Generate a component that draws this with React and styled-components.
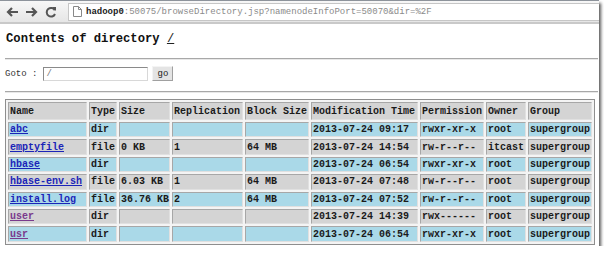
import React from "react";
import styled, { createGlobalStyle } from "styled-components";

const GlobalStyle = createGlobalStyle`
  body {
    margin: 0;
    background: #fff;
  }
`;

const Window = styled.div`
  width: 599px;
  height: 246px;
  background: #fff;
  box-shadow: 2px 3px 3px rgba(0, 0, 0, 0.65);
  overflow: hidden;
`;

const Toolbar = styled.div`
  height: 21px;
  display: flex;
  align-items: center;
  background: linear-gradient(#f7f7f7, #e6e6e6);
  border-top: 1px solid #8d939b;
  border-bottom: 2px solid #c9c9c9;
`;

const NavButton = styled.span`
  width: 19px;
  height: 19px;
  display: flex;
  align-items: center;
  justify-content: center;
  margin-left: ${({ $first }) => ($first ? "3px" : "0")};
`;

const AddressBar = styled.div`
  flex: 1;
  height: 16px;
  margin-left: 8px;
  display: flex;
  align-items: center;
  gap: 4px;
  padding-left: 4px;
  background: #fff;
  border: 1px solid #c6c6c6;
  border-right: none;
  font-family: "Liberation Mono", monospace;
  font-size: 9px;
  color: #8a8a8a;
  white-space: nowrap;
`;

const Host = styled.span`
  color: #222;
  font-weight: bold;
`;

const Page = styled.div`
  padding: 0 1px 0 5px;
  font-family: "Liberation Mono", "DejaVu Sans Mono", monospace;
`;

const Heading = styled.h1`
  margin: 8px 0 0 1px;
  font-size: 12.2px;
  line-height: 15px;
  font-weight: bold;
  color: #111;

  a {
    color: #222;
    font-weight: normal;
  }
`;

const Rule = styled.hr`
  margin: ${({ $top }) => $top}px 0 0 0;
  height: 0;
  border: none;
  border-top: 1px solid #a8a8a8;
  border-bottom: 1px solid #e8e8e8;
`;

const GotoRow = styled.form`
  margin-top: 6px;
  display: flex;
  align-items: center;
  font-size: 9px;
  color: #333;
`;

const GotoInput = styled.input`
  margin-left: 6px;
  width: 99px;
  height: 12px;
  padding: 0 2px;
  border: 1px solid #8a8a8a;
  border-right-color: #d8d8d8;
  border-bottom-color: #d8d8d8;
  font-family: "Liberation Mono", monospace;
  font-size: 9px;
  color: #777;
  outline: none;
`;

const GoButton = styled.button`
  margin-left: 4px;
  width: 21px;
  height: 15px;
  padding: 0;
  background: #e4e4e4;
  border: 1px solid #a0a0a0;
  border-top-color: #f4f4f4;
  border-left-color: #f4f4f4;
  font-family: "Liberation Mono", monospace;
  font-size: 9px;
  color: #222;
`;

const Table = styled.table`
  margin-top: 6px;
  width: 588px;
  table-layout: fixed;
  border: 1px solid #8e8e8e;
  border-spacing: 2px;
  background: #f4f4f4;
  font-size: 10px;
  font-weight: bold;
  color: #1a1a1a;
`;

const Cell = styled.td`
  height: 13.4px;
  padding: 0 1px;
  border: 1px solid #a7a7a7;
  border-right-color: #e0e0e0;
  border-bottom-color: #e0e0e0;
  background: ${({ $blue }) => ($blue ? "#aad9e8" : "#d4d4d4")};
  white-space: nowrap;
  line-height: 13px;
`;

const HeadCell = styled(Cell).attrs({ as: "th" })`
  height: 16px;
  text-align: left;
  background: #d4d4d4;
  width: ${({ $w }) => $w}px;
`;

const FileLink = styled.a`
  color: ${({ $visited }) => ($visited ? "#7a3a8c" : "#1b24b8")};
  text-decoration: underline;
`;

const columns = [
  ["Name", 75],
  ["Type", 24],
  ["Size", 47],
  ["Replication", 67],
  ["Block Size", 60],
  ["Modification Time", 103],
  ["Permission", 60],
  ["Owner", 36],
  ["Group", 60],
];

const rows = [
  ["abc", "dir", "", "", "", "2013-07-24 09:17", "rwxr-xr-x", "root", "supergroup"],
  ["emptyfile", "file", "0 KB", "1", "64 MB", "2013-07-24 14:54", "rw-r--r--", "itcast", "supergroup"],
  ["hbase", "dir", "", "", "", "2013-07-24 06:54", "rwxr-xr-x", "root", "supergroup"],
  ["hbase-env.sh", "file", "6.03 KB", "1", "64 MB", "2013-07-24 07:48", "rw-r--r--", "root", "supergroup"],
  ["install.log", "file", "36.76 KB", "2", "64 MB", "2013-07-24 07:52", "rw-r--r--", "root", "supergroup"],
  ["user", "dir", "", "", "", "2013-07-24 14:39", "rwx------", "root", "supergroup", true],
  ["usr", "dir", "", "", "", "2013-07-24 06:54", "rwxr-xr-x", "root", "supergroup", true],
];

const Arrow = ({ flip }) => (
  <svg width="13" height="12" viewBox="0 0 13 12">
    <path
      d={flip ? "M1 6h10M7 2l4 4-4 4" : "M12 6H2M6 2L2 6l4 4"}
      stroke="#555"
      strokeWidth="2.2"
      fill="none"
    />
  </svg>
);

const Reload = () => (
  <svg width="12" height="12" viewBox="0 0 12 12">
    <path d="M9.8 4.2A4.3 4.3 0 1 0 10 8" stroke="#555" strokeWidth="2" fill="none" />
    <path d="M7 1h4v4z" fill="#555" />
  </svg>
);

const PageIcon = () => (
  <svg width="9" height="11" viewBox="0 0 9 11">
    <path d="M0.5 0.5h5l3 3v7h-8z M5.5 0.5v3h3" stroke="#888" fill="#fff" />
  </svg>
);

export default function App() {
  return (
    <>
      <GlobalStyle />
      <Window>
        <Toolbar>
          <NavButton $first>
            <Arrow />
          </NavButton>
          <NavButton>
            <Arrow flip />
          </NavButton>
          <NavButton>
            <Reload />
          </NavButton>
          <AddressBar>
            <PageIcon />
            <span>
              <Host>hadoop0</Host>:50075/browseDirectory.jsp?namenodeInfoPort=50070&amp;dir=%2F
            </span>
          </AddressBar>
        </Toolbar>
        <Page>
          <Heading>
            Contents of directory <a href="#">/</a>
          </Heading>
          <Rule $top={11} />
          <GotoRow onSubmit={(e) => e.preventDefault()}>
            Goto :
            <GotoInput defaultValue="/" />
            <GoButton>go</GoButton>
          </GotoRow>
          <Rule $top={10} />
          <Table>
            <thead>
              <tr>
                {columns.map(([label, w]) => (
                  <HeadCell key={label} $w={w}>
                    {label}
                  </HeadCell>
                ))}
              </tr>
            </thead>
            <tbody>
              {rows.map((r, i) => (
                <tr key={r[0]}>
                  {r.slice(0, 9).map((v, j) => (
                    <Cell key={j} $blue={i % 2 === 0}>
                      {j === 0 ? (
                        <FileLink href="#" $visited={r[9]}>
                          {v}
                        </FileLink>
                      ) : (
                        v
                      )}
                    </Cell>
                  ))}
                </tr>
              ))}
            </tbody>
          </Table>
        </Page>
      </Window>
    </>
  );
}
